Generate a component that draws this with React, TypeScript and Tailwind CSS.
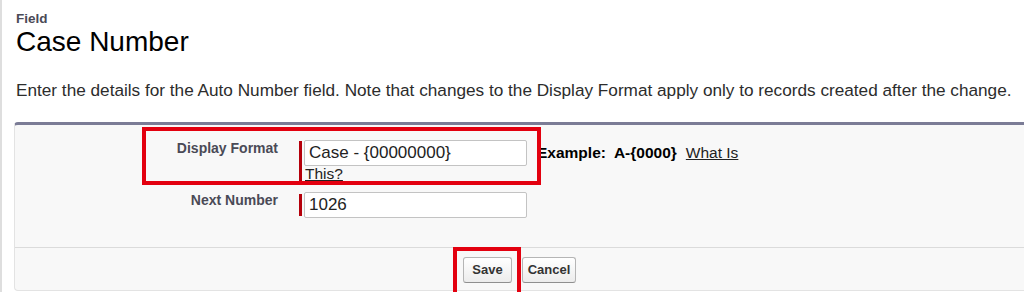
import React from "react";

const labelCls =
  "w-[284px] shrink-0 pr-[21px] text-right text-[14px] leading-[16px] font-bold text-[#4a4a56]";

const inputCls =
  "w-[223px] h-[26px] shrink-0 rounded-[2px] border border-[#c3c3c3] bg-white px-[4px] text-[17px] text-[#222] outline-none";

const btnCls =
  "h-[26px] rounded-[3px] border border-[#b5b5b5] border-b-[#8f8f8f] bg-gradient-to-b from-white to-[#ececec] text-[13px] font-bold text-[#333]";

export default function App() {
  return (
    <div
      className="relative w-[1024px] h-[292px] overflow-hidden bg-white border-l-2 border-[#dedede]"
      style={{ fontFamily: '"Liberation Sans", Arial, sans-serif' }}
    >
      {/* page header */}
      <div className="pl-[14px] pt-[12px]">
        <div className="text-[13.5px] leading-[14px] font-bold text-[#4a4a56]">Field</div>
        <h1 className="text-[28px] leading-[32px] text-black">Case Number</h1>
      </div>

      <p className="mt-[22px] pl-[14px] text-[17.2px] leading-[20px] text-[#2c2c2c] whitespace-nowrap">
        Enter the details for the Auto Number field. Note that changes to the Display Format apply only to records
        created after the change.
      </p>

      {/* edit panel */}
      <div className="mt-[22px] ml-[12px] w-[1010px] rounded-tl-[4px] rounded-bl-[4px] border-t-[3px] border-l border-b border-t-[#7b7c96] border-l-[#e3e3e3] border-b-[#e3e3e3] bg-[#f8f8f8]">
        <div className="pt-[15px] pb-[29px]">
          {/* Display Format */}
          <div className="flex">
            <div className={labelCls}>Display Format</div>
            <div className="border-l-[3px] border-[#b5000b] pl-[2px] pb-[3px] mt-[1px]">
              <div className="flex items-center -mt-[1px]">
                <input className={inputCls} defaultValue="Case - {00000000}" />
                <span className="ml-[10px] text-[15.5px] font-bold text-black">Example:</span>
                <span className="ml-[8px] text-[15.5px] font-bold text-black">A-{"{0000}"}</span>
                <span className="ml-[9px] text-[15.5px] text-[#222] underline">What Is</span>
              </div>
              <div className="pl-[1px] text-[15.5px] leading-[15px] text-[#222] underline">This?</div>
            </div>
          </div>

          {/* Next Number */}
          <div className="mt-[8px] flex">
            <div className={labelCls}>Next Number</div>
            <div className="flex items-center">
              <div className="w-[3px] h-[22px] bg-[#b5000b]" />
              <input className={`${inputCls} ml-[2px]`} defaultValue="1026" />
            </div>
          </div>
        </div>

        <div className="border-t border-[#dbdbdb] pt-[9px] pb-[7px] flex justify-center gap-[10px]">
          <button className={`${btnCls} w-[49px]`}>Save</button>
          <button className={`${btnCls} w-[54px]`}>Cancel</button>
        </div>
      </div>

      {/* highlight boxes */}
      <div className="absolute left-[140px] top-[127px] w-[399px] h-[58px] border-4 border-[#e3000f]" />
      <div className="absolute left-[451px] top-[247px] w-[68px] h-[50px] border-4 border-[#e3000f]" />
    </div>
  );
}
